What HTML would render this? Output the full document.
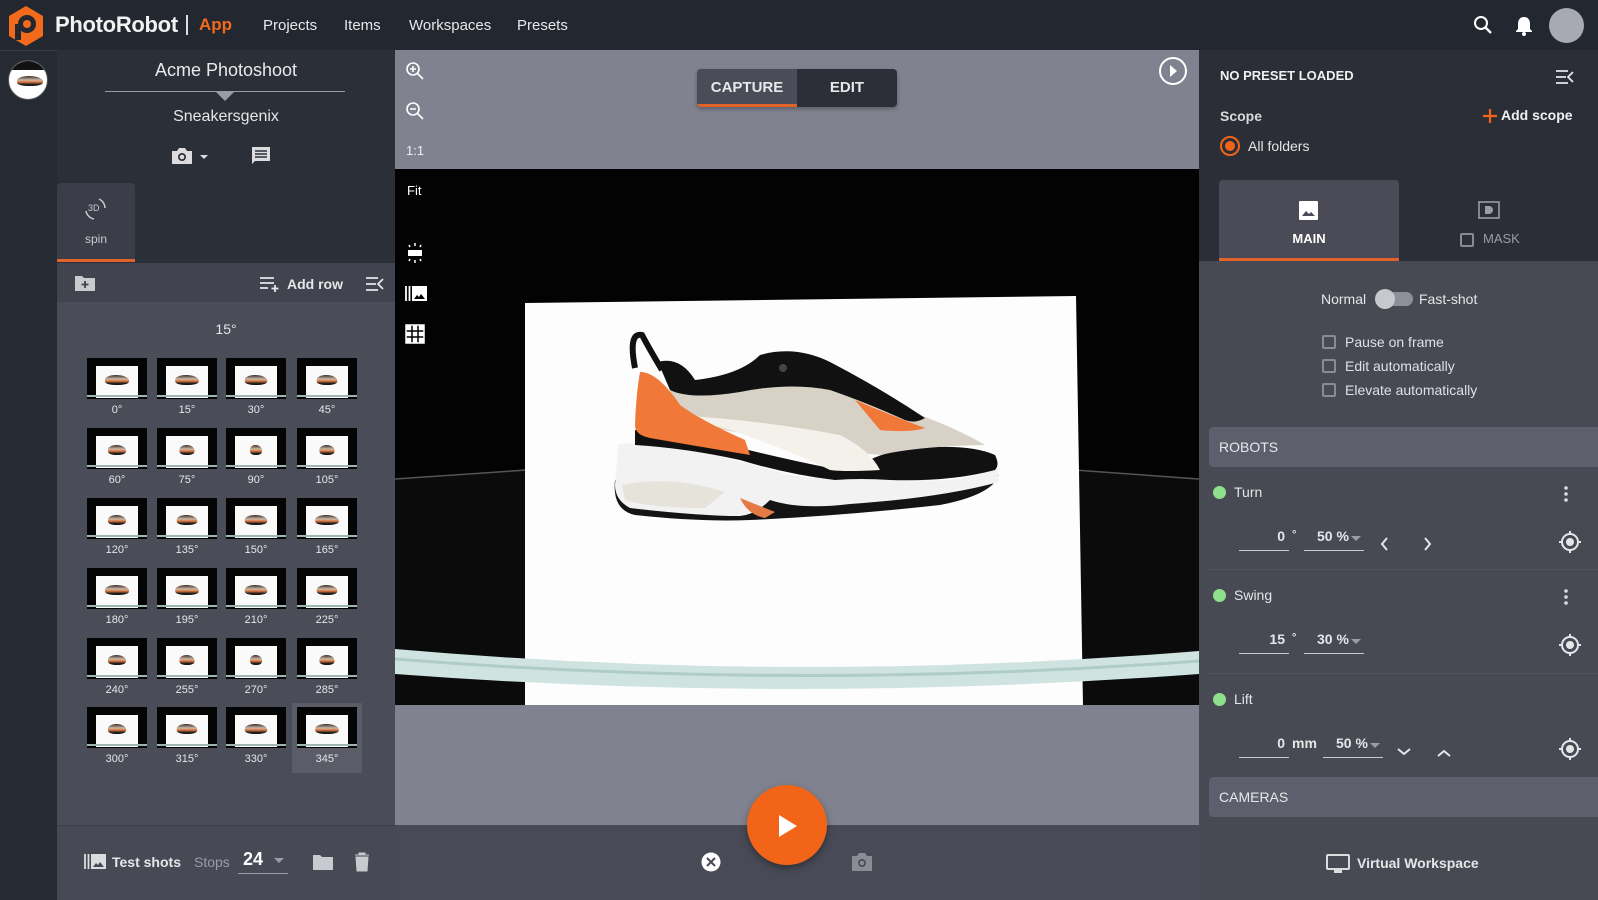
<!DOCTYPE html>
<html><head><meta charset="utf-8">
<style>
*{box-sizing:border-box;margin:0;padding:0}
body{width:1598px;height:900px;overflow:hidden;background:#23272f;font-family:"Liberation Sans",Arial,sans-serif;color:#fff;position:relative}
.abs{position:absolute}
.top{left:0;top:0;width:1598px;height:50px;background:#23272f}
.nav{top:17px;font-size:15px;color:#e6e7ea}
.rail{left:0;top:50px;width:57px;height:850px;background:#262a32;border-top:1px solid #3a3e47}
.lp{left:57px;top:50px;width:338px;height:850px;background:#2b2f38}
.grid{left:57px;top:302px;width:338px;height:523px;background:#4a4c57}
.tb{left:57px;top:263px;width:338px;height:39px;background:#41444e}
.lbot{left:57px;top:825px;width:338px;height:75px;background:#474a55;border-top:1px solid #3d404a}
.th{position:absolute;width:60px;height:41px;background:#050505;overflow:hidden}
.th i{position:absolute;left:9px;top:8px;width:42px;height:32px;background:#fafafa}
.th b{position:absolute;left:0;bottom:2px;width:60px;height:2px;background:#9fb5b2}
.th s{position:absolute;left:18px;top:17px;width:24px;height:10px;border-radius:50% 60% 40% 40%;background:linear-gradient(180deg,#3a2a22 0,#c9b8a8 40%,#e07a40 60%,#1a1a1a 85%);}
.tl{position:absolute;width:60px;text-align:center;font-size:11px;color:#e6e6e9}
.center{left:395px;top:50px;width:804px;height:775px;background:#80838f}
.cbot{left:395px;top:825px;width:804px;height:75px;background:#484a55}
.rp{left:1199px;top:50px;width:399px;height:850px;background:#2b2e37}
.rlow{left:1199px;top:261px;width:399px;height:639px;background:#474953}
.band{left:1209px;width:389px;height:40px;background:#5d606c;border-radius:4px 0 0 4px;font-size:14px;color:#e8e8ea;padding:12px 0 0 10px}
.cb{position:absolute;width:14px;height:14px;border:2px solid #8a8c95;border-radius:2px}
.txt{position:absolute;white-space:nowrap}
.dot{position:absolute;width:13px;height:13px;border-radius:50%;background:#8fe08a}
.ul{position:absolute;height:1px;background:#c9cad0}
</style></head><body>
<div class="abs top"></div>
<svg class="abs" style="left:6px;top:5px" width="40" height="42" viewBox="0 0 40 42">
<polygon points="20,1 37,11 37,31 20,41 3,31 3,11" fill="#f26a1b"/>
<circle cx="21" cy="19" r="9" fill="#23272f"/><circle cx="21" cy="19" r="4" fill="#f26a1b"/>
<rect x="9" y="19" width="6" height="16" fill="#23272f"/>
</svg>
<div class="txt" style="left:55px;top:12px;font-size:22px;font-weight:bold;color:#f2f2f2;letter-spacing:-0.3px">PhotoRobot</div>
<div class="abs" style="left:186px;top:15px;width:2px;height:20px;background:#ddd"></div>
<div class="txt" style="left:199px;top:15px;font-size:17px;font-weight:bold;color:#f26a1b">App</div>
<div class="txt nav" style="left:263px">Projects</div>
<div class="txt nav" style="left:344px">Items</div>
<div class="txt nav" style="left:409px">Workspaces</div>
<div class="txt nav" style="left:517px">Presets</div>
<svg class="abs" style="left:1473px;top:15px" width="20" height="20" viewBox="0 0 20 20"><circle cx="8" cy="8" r="6" stroke="#fff" stroke-width="2" fill="none"/><path d="M12.5 12.5L18 18" stroke="#fff" stroke-width="2.4"/></svg>
<svg class="abs" style="left:1514px;top:15px" width="20" height="22" viewBox="0 0 20 22"><path d="M10 2c-4 0-6 3-6 7v5l-2 2v1h16v-1l-2-2V9c0-4-2-7-6-7z" fill="#fff"/><circle cx="10" cy="19" r="2" fill="#fff"/></svg>
<div class="abs" style="left:1549px;top:8px;width:35px;height:35px;border-radius:50%;background:#a7a9b3"></div>

<div class="abs rail"></div>
<div class="abs" style="left:8px;top:60px;width:40px;height:40px;border-radius:50%;background:#fff;overflow:hidden;border:1px solid #555">
<div style="height:9px;background:#111"></div>
<div style="position:absolute;left:8px;top:15px;width:26px;height:10px;border-radius:50% 60% 40% 40%;background:linear-gradient(180deg,#3a2a22 0,#c9b8a8 40%,#e07a40 60%,#1a1a1a 85%)"></div></div>

<div class="abs lp"></div>
<div class="txt" style="left:57px;width:338px;text-align:center;top:60px;font-size:18px;color:#eaeaec">Acme Photoshoot</div>
<div class="abs" style="left:105px;top:91px;width:240px;height:1px;background:#9a9ca4"></div>
<div class="abs" style="left:216px;top:92px;width:0;height:0;border-left:9px solid transparent;border-right:9px solid transparent;border-top:9px solid #9a9ca4"></div>
<div class="txt" style="left:57px;width:338px;text-align:center;top:108px;font-size:16px;color:#e6e6e9">Sneakersgenix</div>
<svg class="abs" style="left:170px;top:146px" width="44" height="20" viewBox="0 0 44 20"><path d="M2 5h5l2-3h6l2 3h5v13H2z" fill="#dcdcdf"/><circle cx="12" cy="11" r="4" fill="#2b2f38"/><circle cx="12" cy="11" r="2.3" fill="#dcdcdf"/><path d="M30 9h8l-4 4z" fill="#dcdcdf"/></svg>
<svg class="abs" style="left:251px;top:146px" width="20" height="20" viewBox="0 0 20 20"><path d="M1 1h18v14H4l-3 3z" fill="#dcdcdf"/><path d="M4 5h12M4 8h12M4 11h12" stroke="#2b2f38" stroke-width="1.5"/></svg>
<div class="abs" style="left:57px;top:183px;width:78px;height:79px;background:#3b3e48;border-radius:4px 4px 0 0;border-bottom:3px solid #e0642a"></div>
<svg class="abs" style="left:80px;top:196px" width="30" height="26" viewBox="0 0 30 26"><path d="M19 3a10 10 0 0 1 6 9M6 15a10 10 0 0 0 8 8" stroke="#c9cad0" stroke-width="1.5" fill="none"/><text x="8" y="15" font-size="9" fill="#c9cad0" font-family="Liberation Sans">3D</text></svg>
<div class="txt" style="left:57px;width:78px;text-align:center;top:232px;font-size:12px;color:#c9cad0">spin</div>
<div class="abs tb"></div>
<svg class="abs" style="left:74px;top:274px" width="22" height="18" viewBox="0 0 22 18"><path d="M1 2h7l2 2h11v13H1z" fill="#c9cad0"/><path d="M11 7v7M7.5 10.5h7" stroke="#41444e" stroke-width="1.8"/></svg>
<svg class="abs" style="left:259px;top:276px" width="22" height="16" viewBox="0 0 22 16"><path d="M1 2h14M1 7h14M1 12h8M16 9v7M12.5 12.5h7" stroke="#e6e6e9" stroke-width="1.8"/></svg>
<div class="txt" style="left:287px;top:276px;font-size:14px;font-weight:bold;color:#e6e6e9">Add row</div>
<svg class="abs" style="left:365px;top:277px" width="20" height="14" viewBox="0 0 20 14"><path d="M1 1h12M1 7h10M1 13h12M18 2l-5 5 5 5" stroke="#e6e6e9" stroke-width="1.8" fill="none"/></svg>
<div class="abs grid"></div>
<div class="txt" style="left:57px;width:338px;text-align:center;top:321px;font-size:14px;color:#e6e6e9">15°</div>
<div class="abs" style="left:292px;top:703px;width:70px;height:70px;background:#5a5c68"></div>
<div id="thumbs"></div>
<div class="abs lbot"></div>
<svg class="abs" style="left:83px;top:853px" width="24" height="16" viewBox="0 0 24 16"><path d="M2 1v15M5.5 1v15" stroke="#dcdcdf" stroke-width="1.8"/><rect x="8" y="1" width="15" height="15" fill="#dcdcdf"/><path d="M10 14l3-4 2 2 2-3 4 5z" fill="#474a55"/></svg>
<div class="txt" style="left:112px;top:854px;font-size:14px;font-weight:bold;color:#e6e6e9">Test shots</div>
<div class="txt" style="left:194px;top:854px;font-size:14px;color:#9a9ca5">Stops</div>
<div class="txt" style="left:243px;top:849px;font-size:18px;font-weight:bold;color:#fff">24</div>
<div class="abs" style="left:274px;top:858px;border-left:5px solid transparent;border-right:5px solid transparent;border-top:5px solid #9a9ca5"></div>
<div class="ul" style="left:238px;top:873px;width:50px;background:#9a9ca5"></div>
<svg class="abs" style="left:312px;top:853px" width="22" height="18" viewBox="0 0 22 18"><path d="M1 2h7l2 2h11v13H1z" fill="#c9cad0"/></svg>
<svg class="abs" style="left:354px;top:852px" width="16" height="20" viewBox="0 0 16 20"><path d="M1 3h14M5 3V1h6v2M2 5h12l-1 14H3z" fill="#c9cad0" stroke="#c9cad0"/></svg>

<div class="abs center"></div>
<svg class="abs" style="left:395px;top:169px" width="804" height="536" viewBox="0 0 804 536">
<rect width="804" height="536" fill="#030303"/>
<path d="M0 310 L130 300 L130 536 L0 536z" fill="#0b0b0b"/>
<path d="M681 300 L804 310 L804 536 L681 536z" fill="#0b0b0b"/>
<path d="M0 310 L132 301 M679 301 L804 310" stroke="#555" stroke-width="1.5"/>
<path d="M130 134 L681 127 L688 536 L130 536 Z" fill="#fdfdfd"/>
<path d="M0 480 Q400 515 804 482 L804 505 Q400 535 0 505 Z" fill="#cfe4e0"/>
<path d="M0 490 Q400 522 804 492" stroke="#b0ccc7" stroke-width="3" fill="none"/>
<g transform="translate(195,151)">
<path d="M25 160 Q22 190 45 195 Q110 202 160 200 Q250 196 350 185 Q402 175 409 155 Q360 170 260 178 Q150 185 25 160Z" fill="#141414"/>
<path d="M28 125 Q45 120 100 130 Q150 140 200 155 Q245 162 270 155 Q320 162 360 160 Q395 155 408 148 L409 162 Q350 178 260 184 Q210 190 180 180 Q165 195 150 196 Q110 196 40 188 Q25 180 25 165Z" fill="#f2f2f2"/>
<path d="M32 165 Q80 155 135 172 L115 188 Q60 188 35 180Z" fill="#e6e3da"/>
<path d="M150 178 Q170 186 185 192 L175 198 Q158 195 150 178Z" fill="#e67a45"/>
<path d="M45 110 Q100 116 150 128 Q200 140 230 146 Q250 150 262 150 Q290 130 330 128 Q380 124 405 135 Q410 145 405 150 Q360 162 300 160 Q270 158 245 160 Q200 155 150 140 Q95 128 45 125Z" fill="#111"/>
<path d="M80 70 Q160 75 220 60 Q280 75 330 95 Q370 110 395 125 Q330 126 290 135 Q230 130 160 115 Q110 105 85 100Z" fill="#d8d1c6"/>
<path d="M85 95 Q170 100 250 115 Q280 130 290 150 Q255 152 240 150 Q200 130 140 110 Q110 102 85 98Z" fill="#f4f1ea"/>
<path d="M50 52 Q68 52 90 85 Q110 100 155 120 L160 135 Q100 125 60 118 Q45 115 45 105 Q46 75 50 52Z" fill="#f0793a"/>
<path d="M265 80 Q300 95 335 108 Q320 113 290 110Z" fill="#f0793a"/>
<path d="M68 42 Q90 36 105 60 Q150 55 170 35 Q205 25 240 42 Q290 68 335 98 Q325 104 315 100 Q275 82 240 70 Q200 62 150 72 Q100 80 80 70Z" fill="#111"/>
<path d="M45 48 Q38 12 52 15 Q60 30 72 50" stroke="#111" stroke-width="6" fill="none"/>
<circle cx="193" cy="48" r="4" fill="#444"/>
</g>
</svg>
<svg class="abs" style="left:405px;top:61px" width="20" height="20" viewBox="0 0 20 20"><circle cx="8" cy="8" r="6" stroke="#fff" stroke-width="1.6" fill="none"/><path d="M12.5 12.5L18 18M8 5v6M5 8h6" stroke="#fff" stroke-width="1.6"/></svg>
<svg class="abs" style="left:405px;top:101px" width="20" height="20" viewBox="0 0 20 20"><circle cx="8" cy="8" r="6" stroke="#fff" stroke-width="1.6" fill="none"/><path d="M12.5 12.5L18 18M5 8h6" stroke="#fff" stroke-width="1.6"/></svg>
<div class="txt" style="left:406px;top:143px;font-size:13px;color:#f0f0f0">1:1</div>
<div class="txt" style="left:407px;top:183px;font-size:13px;color:#fff">Fit</div>
<svg class="abs" style="left:405px;top:242px" width="20" height="22" viewBox="0 0 20 22"><rect x="3" y="8" width="14" height="6" fill="#fff"/><path d="M10 1v3M10 18v3M4 3l1 2M16 3l-1 2M4 19l1-2M16 19l-1-2" stroke="#fff" stroke-width="1.5"/></svg>
<svg class="abs" style="left:404px;top:285px" width="24" height="16" viewBox="0 0 24 16"><path d="M2 1v15M5.5 1v15" stroke="#fff" stroke-width="1.8"/><rect x="8" y="1" width="15" height="15" fill="#fff"/><path d="M10 14l3-4 2 2 2-3 4 5z" fill="#000"/></svg>
<svg class="abs" style="left:405px;top:324px" width="20" height="20" viewBox="0 0 20 20"><rect x="1" y="1" width="18" height="18" fill="#fff"/><path d="M7 1v18M13 1v18M1 7h18M1 13h18" stroke="#000" stroke-width="1.5"/><rect x="1" y="1" width="18" height="18" fill="none" stroke="#fff" stroke-width="1.5"/></svg>
<div class="abs" style="left:697px;top:69px;width:200px;height:38px;border-radius:4px;background:#2c2f38;overflow:hidden;box-shadow:0 2px 4px rgba(0,0,0,.3)">
<div style="position:absolute;left:0;top:0;width:100px;height:38px;background:#4a4c57;border-bottom:3px solid #e0642a"></div>
<div class="txt" style="left:0;width:100px;text-align:center;top:10px;font-size:15px;font-weight:bold;color:#e8e8ea">CAPTURE</div>
<div class="txt" style="left:100px;width:100px;text-align:center;top:10px;font-size:15px;font-weight:bold;color:#e8e8ea">EDIT</div></div>
<svg class="abs" style="left:1158px;top:56px" width="30" height="30" viewBox="0 0 30 30"><circle cx="15" cy="15" r="13" stroke="#fff" stroke-width="2" fill="none"/><path d="M12 9l7 6-7 6z" fill="#fff"/></svg>
<div class="abs cbot"></div>
<div class="abs" style="left:747px;top:785px;width:80px;height:80px;border-radius:50%;background:#f26418;box-shadow:0 3px 8px rgba(0,0,0,.35)"></div>
<svg class="abs" style="left:776px;top:813px" width="24" height="26" viewBox="0 0 24 26"><path d="M3 2l18 11L3 24z" fill="#fff"/></svg>
<svg class="abs" style="left:701px;top:852px" width="20" height="20" viewBox="0 0 20 20"><circle cx="10" cy="10" r="9.5" fill="#fff"/><path d="M6 6l8 8M14 6l-8 8" stroke="#484a55" stroke-width="2"/></svg>
<svg class="abs" style="left:851px;top:852px" width="22" height="20" viewBox="0 0 22 20"><path d="M1 4h5l2-3h6l2 3h5v15H1z" fill="#8a8c95"/><circle cx="11" cy="11" r="4" fill="#484a55"/><circle cx="11" cy="11" r="2.3" fill="#8a8c95"/></svg>

<div class="abs rp"></div>
<div class="txt" style="left:1220px;top:68px;font-size:13px;font-weight:bold;color:#f0f0f2">NO PRESET LOADED</div>
<svg class="abs" style="left:1555px;top:70px" width="20" height="14" viewBox="0 0 20 14"><path d="M1 1h12M1 7h10M1 13h12M18 2l-5 5 5 5" stroke="#e6e6e9" stroke-width="1.8" fill="none"/></svg>
<div class="txt" style="left:1220px;top:108px;font-size:14px;font-weight:bold;color:#d8d9dc">Scope</div>
<svg class="abs" style="left:1482px;top:108px" width="16" height="16" viewBox="0 0 16 16"><path d="M8 1v14M1 8h14" stroke="#f26418" stroke-width="2.2"/></svg>
<div class="txt" style="left:1501px;top:107px;font-size:14px;font-weight:bold;color:#f0f0f2">Add scope</div>
<div class="abs" style="left:1220px;top:136px;width:20px;height:20px;border-radius:50%;border:2px solid #f26418"></div>
<div class="abs" style="left:1225px;top:141px;width:10px;height:10px;border-radius:50%;background:#f26418"></div>
<div class="txt" style="left:1248px;top:138px;font-size:14px;color:#e6e6e9">All folders</div>
<div class="abs" style="left:1219px;top:180px;width:180px;height:81px;background:#4a4b57;border-radius:4px 4px 0 0;border-bottom:3px solid #e0642a"></div>
<svg class="abs" style="left:1299px;top:201px" width="19" height="19" viewBox="0 0 19 19"><rect width="19" height="19" rx="1" fill="#fff"/><path d="M3 15l4-5 3 3 2-2 4 4z" fill="#4a4b57"/></svg>
<div class="txt" style="left:1219px;width:180px;text-align:center;top:231px;font-size:13px;font-weight:bold;color:#fff">MAIN</div>
<svg class="abs" style="left:1478px;top:201px" width="22" height="18" viewBox="0 0 22 18"><rect x="1" y="1" width="20" height="16" fill="none" stroke="#9a9ca5" stroke-width="1.6"/><circle cx="11" cy="9" r="4" fill="#9a9ca5"/><rect x="7" y="5" width="4" height="8" fill="#9a9ca5"/></svg>
<div class="cb" style="left:1460px;top:233px"></div>
<div class="txt" style="left:1483px;top:231px;font-size:13px;color:#9a9ca5">MASK</div>
<div class="abs rlow"></div>
<div class="txt" style="left:1321px;top:291px;font-size:14px;color:#e6e6e9">Normal</div>
<div class="abs" style="left:1378px;top:292px;width:35px;height:14px;border-radius:7px;background:#8e9099"></div>
<div class="abs" style="left:1375px;top:289px;width:20px;height:20px;border-radius:50%;background:#c8c9ce"></div>
<div class="txt" style="left:1419px;top:291px;font-size:14px;color:#e6e6e9">Fast-shot</div>
<div class="cb" style="left:1322px;top:335px"></div><div class="txt" style="left:1345px;top:334px;font-size:14px;color:#e0e0e3">Pause on frame</div>
<div class="cb" style="left:1322px;top:359px"></div><div class="txt" style="left:1345px;top:358px;font-size:14px;color:#e0e0e3">Edit automatically</div>
<div class="cb" style="left:1322px;top:383px"></div><div class="txt" style="left:1345px;top:382px;font-size:14px;color:#e0e0e3">Elevate automatically</div>
<div class="abs band" style="top:427px">ROBOTS</div>
<div class="abs band" style="top:777px">CAMERAS</div>
<div class="abs" style="left:1208px;top:569px;width:390px;height:1px;background:#52545f"></div>
<div class="abs" style="left:1208px;top:673px;width:390px;height:1px;background:#52545f"></div>
<div id="robots"></div>
<svg class="abs" style="left:1326px;top:854px" width="24" height="20" viewBox="0 0 24 20"><rect x="1" y="1" width="22" height="14" rx="1" fill="none" stroke="#dcdcdf" stroke-width="2"/><rect x="8" y="16" width="8" height="3" fill="#dcdcdf"/></svg>
<div class="txt" style="left:1357px;top:855px;font-size:14px;font-weight:bold;color:#e6e6e9">Virtual Workspace</div>

<script>
var h='',cols=[87,157,226,297],rows=[358,428,498,568,638,707],a=0;
for(var r=0;r<6;r++)for(var c=0;c<4;c++){h+='<div class="th" style="left:'+cols[c]+'px;top:'+rows[r]+'px"><i></i><b></b><s style="transform:scaleX('+(0.5+0.5*Math.abs(Math.cos(a*Math.PI/180)))+')"></s></div><div class="tl" style="left:'+cols[c]+'px;top:'+(rows[r]+46)+'px">'+a+'°</div>';a+=15;}
document.getElementById('thumbs').outerHTML=h;
var R='',rb=[['Turn',492,'0','°','50',1],['Swing',595,'15','°','30',0],['Lift',699,'0','mm','50',2]];
rb.forEach(function(x){var y=x[1],iy=y+47;
R+='<div class="dot" style="left:1213px;top:'+(y-6)+'px"></div><div class="txt" style="left:1234px;top:'+(y-8)+'px;font-size:14px;color:#e6e6e9">'+x[0]+'</div>';
if(x[5]!=2)R+='<svg class="abs" style="left:1563px;top:'+(y-7)+'px" width="6" height="18"><circle cx="3" cy="3" r="1.8" fill="#ddd"/><circle cx="3" cy="9" r="1.8" fill="#ddd"/><circle cx="3" cy="15" r="1.8" fill="#ddd"/></svg>';
var off=x[3]=='mm'?19:0;
R+='<div class="txt" style="left:1220px;width:65px;text-align:right;top:'+(iy-11)+'px;font-size:14px;font-weight:bold;color:#e6e6e9">'+x[2]+'</div><div class="txt" style="left:1292px;top:'+(x[3]=='mm'?iy-11:iy-10)+'px;font-size:'+(x[3]=='mm'?14:11)+'px;font-weight:bold;color:#e6e6e9">'+x[3]+'</div>';
R+='<div class="ul" style="left:1239px;top:'+(iy+11)+'px;width:50px"></div>';
R+='<div class="txt" style="left:'+(1317+off)+'px;top:'+(iy-11)+'px;font-size:14px;font-weight:bold;color:#e6e6e9">'+x[4]+' %</div><div class="abs" style="left:'+(1351+off)+'px;top:'+(iy-3)+'px;border-left:5px solid transparent;border-right:5px solid transparent;border-top:5px solid #9a9ca5"></div><div class="ul" style="left:'+(1304+off)+'px;top:'+(iy+11)+'px;width:60px"></div>';
if(x[5]==1)R+='<svg class="abs" style="left:1378px;top:'+(iy-3)+'px" width="60" height="16"><path d="M9 2l-5 6 5 6M47 2l5 6-5 6" stroke="#e6e6e9" stroke-width="2" fill="none"/></svg>';
if(x[5]==2)R+='<svg class="abs" style="left:1396px;top:'+(iy-1)+'px" width="60" height="16"><path d="M2 4l6 5 6-5M42 11l6-5 6 5" stroke="#e6e6e9" stroke-width="2" fill="none"/></svg>';
R+='<svg class="abs" style="left:1558px;top:'+(iy-9)+'px" width="24" height="24" viewBox="0 0 24 24"><circle cx="12" cy="12" r="8" stroke="#e6e6e9" stroke-width="2" fill="none"/><circle cx="12" cy="12" r="4" fill="#e6e6e9"/><path d="M12 1v4M12 19v4M1 12h4M19 12h4" stroke="#e6e6e9" stroke-width="2"/></svg>';});
document.getElementById('robots').outerHTML=R;
</script>
</body></html>
